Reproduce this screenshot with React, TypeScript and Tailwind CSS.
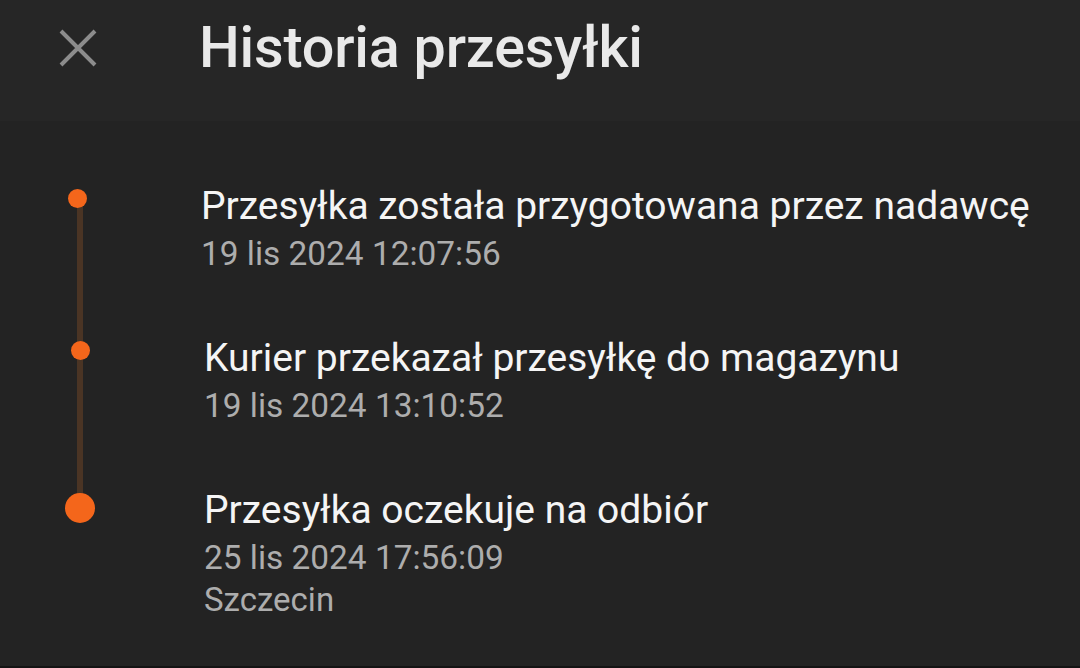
const EVENTS = [
  {
    title: 'Przesyłka została przygotowana przez nadawcę',
    date: '19 lis 2024 12:07:56',
    shift: 'ml-[-3px]',
    big: false,
  },
  {
    title: 'Kurier przekazał przesyłkę do magazynu',
    date: '19 lis 2024 13:10:52',
    shift: '',
    big: false,
  },
  {
    title: 'Przesyłka oczekuje na odbiór',
    date: '25 lis 2024 17:56:09',
    place: 'Szczecin',
    shift: '',
    big: true,
  },
];

function CloseIcon() {
  return (
    <svg viewBox="0 0 40 40" className="h-[40px] w-[40px]" fill="none" stroke="#8c8c8c" strokeWidth={4} strokeLinecap="butt">
      <path d="M3 3L37 37M37 3L3 37" />
    </svg>
  );
}

export default function App() {
  return (
    <div
      className="flex h-[668px] w-[1080px] flex-col overflow-hidden bg-[#232323]"
      style={{ fontFamily: 'Roboto, "Noto Sans", sans-serif' }}
    >
      {/* Header */}
      <div className="h-[121px] shrink-0 bg-[#262626]">
        <div className="flex h-[95px] items-center">
          <div className="flex w-[155px] justify-center">
            <CloseIcon />
          </div>
          <h1 className="ml-[44px] text-[57.5px] font-medium leading-none tracking-[-0.2px] text-[#e9e9e9]">
            Historia przesyłki
          </h1>
        </div>
      </div>

      {/* Timeline */}
      <div className="relative mt-[60px] flex flex-col gap-[58px]">
        <div className="absolute left-[77px] top-[17px] h-[310px] w-[6px] bg-[#4a3424]" />
        {EVENTS.map((ev) => (
          <div key={ev.title} className={`relative flex ${ev.shift}`}>
            <div className="flex w-[160px] shrink-0 justify-center pt-[8px]">
              {ev.big ? (
                <div className="h-[30px] w-[30px] rounded-full bg-[#f4661b]" />
              ) : (
                <div className="h-[19px] w-[19px] rounded-full bg-[#f4661b]" />
              )}
            </div>
            <div className="ml-[44px] flex flex-col">
              <p className="text-[39px] leading-[51px] text-[#f5f5f5]">{ev.title}</p>
              <p className="text-[33.4px] leading-[43px] text-[#adadad]">{ev.date}</p>
              {ev.place && (
                <p className="text-[33px] leading-[42px] text-[#adadad]">{ev.place}</p>
              )}
            </div>
          </div>
        ))}
      </div>
      <div className="mt-auto h-[2px] bg-[#141414]" />
    </div>
  );
}
